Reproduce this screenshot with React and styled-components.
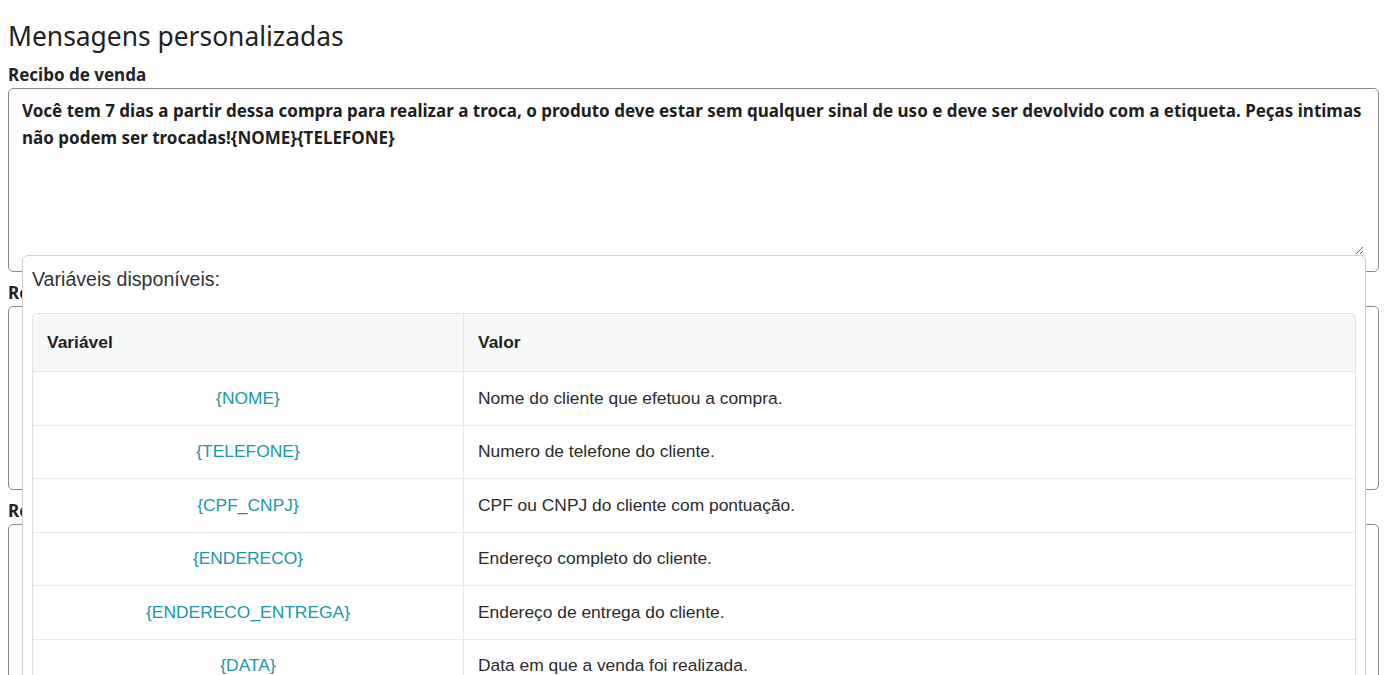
import React from 'react';
import styled, { createGlobalStyle } from 'styled-components';

const GlobalStyle = createGlobalStyle`
  body {
    margin: 0;
    background: #ffffff;
    font-family: "Noto Sans", Lato, sans-serif;
    color: #212121;
  }
`;

const Page = styled.div`
  padding: 20px 13px 0 8px;
  height: 675px;
  box-sizing: border-box;
  overflow: hidden;
`;

const Title = styled.h1`
  margin: 0 0 13px;
  font-size: 26.4px;
  line-height: 32px;
  font-weight: 400;
  color: #222;
`;

const Field = styled.div`
  position: relative;
  margin-bottom: 11px;
`;

const Label = styled.label`
  display: block;
  font-size: 17px;
  line-height: 20px;
  font-weight: 700;
  color: #222;
  margin-bottom: 3px;
`;

const InputBox = styled.div`
  height: 184px;
  box-sizing: border-box;
  padding: 8px 14px 16px 13px;
  border: 1px solid #8a8a8a;
  border-radius: 5px;
  background: #fff;
`;

const TextArea = styled.textarea`
  display: block;
  width: 100%;
  height: 100%;
  box-sizing: border-box;
  padding: 0;
  border: none;
  font-family: "Noto Sans", Lato, sans-serif;
  font-size: 17px;
  line-height: 27px;
  font-weight: 700;
  color: #1f1f1f;
  resize: vertical;
  outline: none;
  background: transparent;
`;

const Popover = styled.div`
  position: absolute;
  top: calc(100% - 17px);
  left: 14px;
  right: 13px;
  z-index: 10;
  background: #fff;
  border: 1px solid #cfcfcf;
  border-radius: 6px;
  padding: 10px 9px 0;
  font-family: "Liberation Sans", Arial, sans-serif;
  color: #333;
`;

const PopTitle = styled.div`
  font-size: 19.6px;
  line-height: 26px;
  margin-bottom: 21px;
`;

const Table = styled.table`
  width: 100%;
  border-collapse: separate;
  border-spacing: 0;
  border: 1px solid #e0e2e5;
  border-bottom: none;
  border-radius: 6px 6px 0 0;
  font-size: 17.4px;
  color: #222;
`;

const Th = styled.th`
  height: 57px;
  padding: 0 14px;
  text-align: left;
  font-weight: 700;
  background: #f8f9fa;
  border-bottom: 1px solid #e3e5e8;
  &:first-child {
    width: 402px;
    border-right: 1px solid #e3e5e8;
    border-top-left-radius: 6px;
  }
  &:last-child {
    border-top-right-radius: 6px;
  }
`;

const Td = styled.td`
  height: 52.5px;
  padding: 0 14px;
  border-bottom: 1px solid #e6e8eb;
  text-align: ${p => (p.$center ? 'center' : 'left')};
  color: ${p => (p.$link ? '#1897a9' : '#2b2b2b')};
  &:first-child {
    border-right: 1px solid #e3e5e8;
  }
`;

const message =
  'Você tem 7 dias a partir dessa compra para realizar a troca, o produto deve estar sem qualquer sinal de uso e deve ser devolvido com a etiqueta. Peças intimas não podem ser trocadas!{NOME}{TELEFONE}';

const variables = [
  ['{NOME}', 'Nome do cliente que efetuou a compra.'],
  ['{TELEFONE}', 'Numero de telefone do cliente.'],
  ['{CPF_CNPJ}', 'CPF ou CNPJ do cliente com pontuação.'],
  ['{ENDERECO}', 'Endereço completo do cliente.'],
  ['{ENDERECO_ENTREGA}', 'Endereço de entrega do cliente.'],
  ['{DATA}', 'Data em que a venda foi realizada.'],
  ['{TOTAL}', 'Valor total da venda.'],
];

export default function App() {
  return (
    <>
      <GlobalStyle />
      <Page>
        <Title>Mensagens personalizadas</Title>

        <Field>
          <Label>Recibo de venda</Label>
          <InputBox>
            <TextArea readOnly defaultValue={message} />
          </InputBox>
          <Popover>
            <PopTitle>Variáveis disponíveis:</PopTitle>
            <Table>
              <thead>
                <tr>
                  <Th>Variável</Th>
                  <Th>Valor</Th>
                </tr>
              </thead>
              <tbody>
                {variables.map(([name, desc]) => (
                  <tr key={name}>
                    <Td $center $link>{name}</Td>
                    <Td>{desc}</Td>
                  </tr>
                ))}
              </tbody>
            </Table>
          </Popover>
        </Field>

        <Field>
          <Label>Recibo de orçamento</Label>
          <InputBox>
            <TextArea readOnly defaultValue="" />
          </InputBox>
        </Field>

        <Field>
          <Label>Recibo de troca</Label>
          <InputBox>
            <TextArea readOnly defaultValue="" />
          </InputBox>
        </Field>
      </Page>
    </>
  );
}
